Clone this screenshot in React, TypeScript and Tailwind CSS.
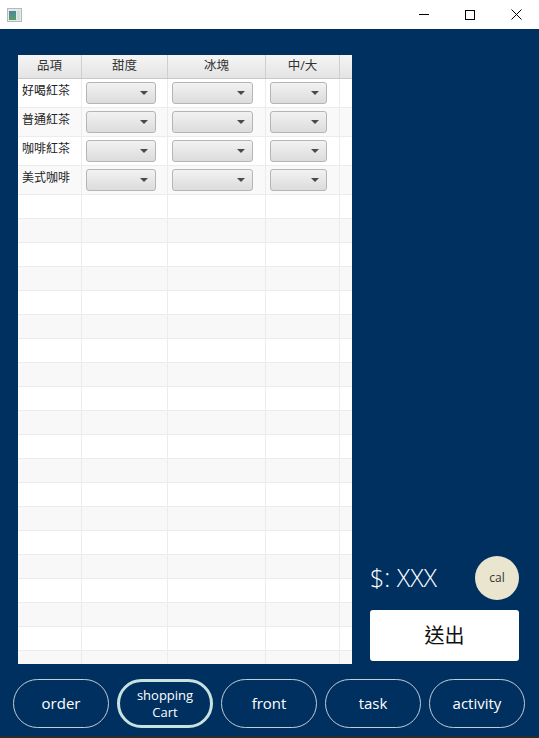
import React from "react";

const cols = "grid grid-cols-[64px_86px_98px_74px_12px]";

function Combo({ w }: { w: string }) {
  return (
    <div
      className={`${w} h-[22px] rounded-[3px] border border-[#b5b5b5] bg-gradient-to-b from-[#f2f2f2] to-[#dcdcdc] flex items-center justify-end pr-[7px]`}
    >
      <svg width="8" height="4" viewBox="0 0 8 4">
        <path d="M0 0 H8 L4 4 Z" fill="#4a4a4a" />
      </svg>
    </div>
  );
}

const items = ["好喝紅茶", "普通紅茶", "咖啡紅茶", "美式咖啡"];

export default function App() {
  const emptyRows = Array.from({ length: 20 });
  return (
    <div
      className="w-[539px] h-[738px] flex flex-col overflow-hidden"
      style={{ fontFamily: '"Open Sans", "Noto Sans CJK TC", sans-serif' }}
    >
      {/* title bar */}
      <div className="h-[29px] bg-white flex items-center shrink-0">
        <div className="ml-[7px]">
          <svg width="15" height="14" viewBox="0 0 15 14">
            <rect x="0.5" y="0.5" width="14" height="13" fill="#e8e8e8" stroke="#b8b8b8" />
            <defs>
              <linearGradient id="g" x1="0" y1="0" x2="0" y2="1">
                <stop offset="0" stopColor="#4a86a8" />
                <stop offset="1" stopColor="#5aa060" />
              </linearGradient>
            </defs>
            <rect x="2" y="3" width="7" height="9" fill="url(#g)" />
            <rect x="10" y="3" width="3" height="9" fill="#cfe0d8" />
          </svg>
        </div>
        <div className="ml-auto flex items-center h-full">
          <div className="w-[46px] h-full flex items-center justify-center">
            <div className="w-[10px] h-[1px] bg-black" />
          </div>
          <div className="w-[46px] h-full flex items-center justify-center">
            <div className="w-[10px] h-[10px] border border-black" />
          </div>
          <div className="w-[46px] h-full flex items-center justify-center">
            <svg width="11" height="11" viewBox="0 0 11 11">
              <path d="M0.5 0.5 L10.5 10.5 M10.5 0.5 L0.5 10.5" stroke="#000" strokeWidth="1" />
            </svg>
          </div>
        </div>
      </div>

      {/* main */}
      <div className="flex-1 bg-[#00305f] flex flex-col">
        <div className="flex pt-[26px]">
          {/* table */}
          <div className="ml-[18px] w-[334px] h-[609px] bg-white overflow-hidden">
            <div className={`${cols} h-[24px] bg-gradient-to-b from-[#f5f5f5] to-[#e4e4e4] border-b border-[#c8c8c8] text-[12.5px] text-[#333]`}>
              {["品項", "甜度", "冰塊", "中/大", ""].map((h, i) => (
                <div
                  key={i}
                  className={`flex items-center justify-center ${i < 4 ? "border-r border-[#cfcfcf]" : ""}`}
                >
                  {h}
                </div>
              ))}
            </div>
            {items.map((it, i) => (
              <div
                key={it}
                className={`${cols} h-[29px] border-b border-[#ececec] ${i % 2 === 1 ? "bg-[#f9f9f9]" : "bg-white"}`}
              >
                <div className="border-r border-[#ececec] pl-[4px] pt-[4px] text-[12px] leading-[16px] text-[#222]">
                  {it}
                </div>
                <div className="border-r border-[#ececec] pl-[4px] pt-[3px]">
                  <Combo w="w-[70px]" />
                </div>
                <div className="border-r border-[#ececec] pl-[4px] pt-[3px]">
                  <Combo w="w-[81px]" />
                </div>
                <div className="border-r border-[#ececec] pl-[4px] pt-[3px]">
                  <Combo w="w-[57px]" />
                </div>
                <div />
              </div>
            ))}
            {emptyRows.map((_, i) => (
              <div
                key={i}
                className={`${cols} h-[24px] border-b border-[#ececec] ${i % 2 === 1 ? "bg-[#f8f8f8]" : "bg-white"}`}
              >
                <div className="border-r border-[#ececec]" />
                <div className="border-r border-[#ececec]" />
                <div className="border-r border-[#ececec]" />
                <div className="border-r border-[#ececec]" />
                <div />
              </div>
            ))}
          </div>

          {/* right panel */}
          <div className="ml-[18px] w-[149px] flex flex-col justify-end pb-[3px]">
            <div className="flex items-center justify-between">
              <span className="text-white text-[25px] font-light leading-none pb-[2px]">$: XXX</span>
              <div className="w-[44px] h-[44px] rounded-full bg-[#e9e5cf] flex items-center justify-center text-[12px] text-[#333]">
                cal
              </div>
            </div>
            <div className="mt-[10px] h-[51px] bg-white rounded-[3px] flex items-center justify-center text-[20px] text-[#111]">
              送出
            </div>
          </div>
        </div>

        {/* bottom nav */}
        <div className="flex gap-[8px] pl-[13px] mt-[15px]">
          <div className="w-[96px] h-[49px] rounded-full border-[1.5px] border-[#c4ccd4] flex items-center justify-center text-white text-[15px]">
            order
          </div>
          <div className="w-[96px] h-[49px] rounded-full border-[3px] border-[#c8e2e0] flex flex-col items-center justify-center text-white text-[13px] leading-[17px]">
            <span>shopping</span>
            <span>Cart</span>
          </div>
          <div className="w-[96px] h-[49px] rounded-full border-[1.5px] border-[#c4ccd4] flex items-center justify-center text-white text-[15px]">
            front
          </div>
          <div className="w-[96px] h-[49px] rounded-full border-[1.5px] border-[#c4ccd4] flex items-center justify-center text-white text-[15px]">
            task
          </div>
          <div className="w-[96px] h-[49px] rounded-full border-[1.5px] border-[#c4ccd4] flex items-center justify-center text-white text-[15px]">
            activity
          </div>
        </div>
      </div>
      <div className="h-[2px] bg-[#2b2b2b] shrink-0" />
    </div>
  );
}
